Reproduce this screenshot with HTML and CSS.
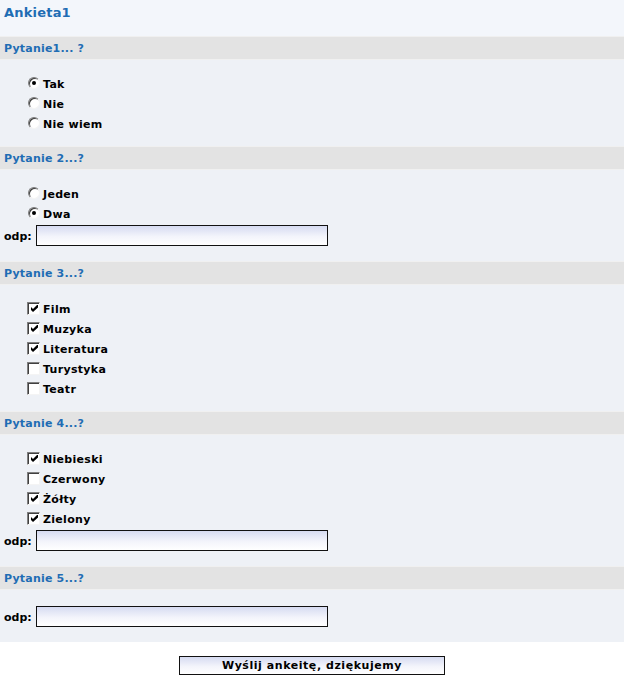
FILE: index.html
```html
<!DOCTYPE html>
<html lang="pl">
<head>
<meta charset="utf-8">
<title>Ankieta1</title>
<link rel="stylesheet" href="styles.css">
</head>
<body>
<form class="survey">
  <div class="title-band"><h1 class="title">Ankieta1</h1></div>

  <section class="q">
    <h2 class="q-head">Pytanie1... ?</h2>
    <div class="q-body">
      <label class="opt"><span class="radio on"><span class="dot"></span></span>Tak</label>
      <label class="opt"><span class="radio"></span>Nie</label>
      <label class="opt"><span class="radio"></span>Nie wiem</label>
    </div>
  </section>

  <section class="q">
    <h2 class="q-head">Pytanie 2...?</h2>
    <div class="q-body q-body-answer">
      <label class="opt"><span class="radio"></span>Jeden</label>
      <label class="opt"><span class="radio on"><span class="dot"></span></span>Dwa</label>
      <div class="answer"><span class="answer-label">odp:</span><span class="field"></span></div>
    </div>
  </section>

  <section class="q">
    <h2 class="q-head">Pytanie 3...?</h2>
    <div class="q-body">
      <label class="opt"><span class="check"><svg viewBox="0 0 7 7" width="7" height="7"><path d="M0 2 L2 4 L6 0 L7 0 L7 2.5 L2 7 L0 5 Z" fill="#000"/></svg></span>Film</label>
      <label class="opt"><span class="check"><svg viewBox="0 0 7 7" width="7" height="7"><path d="M0 2 L2 4 L6 0 L7 0 L7 2.5 L2 7 L0 5 Z" fill="#000"/></svg></span>Muzyka</label>
      <label class="opt"><span class="check"><svg viewBox="0 0 7 7" width="7" height="7"><path d="M0 2 L2 4 L6 0 L7 0 L7 2.5 L2 7 L0 5 Z" fill="#000"/></svg></span>Literatura</label>
      <label class="opt"><span class="check"></span>Turystyka</label>
      <label class="opt"><span class="check"></span>Teatr</label>
    </div>
  </section>

  <section class="q">
    <h2 class="q-head">Pytanie 4...?</h2>
    <div class="q-body q-body-answer">
      <label class="opt"><span class="check"><svg viewBox="0 0 7 7" width="7" height="7"><path d="M0 2 L2 4 L6 0 L7 0 L7 2.5 L2 7 L0 5 Z" fill="#000"/></svg></span>Niebieski</label>
      <label class="opt"><span class="check"></span>Czerwony</label>
      <label class="opt"><span class="check"><svg viewBox="0 0 7 7" width="7" height="7"><path d="M0 2 L2 4 L6 0 L7 0 L7 2.5 L2 7 L0 5 Z" fill="#000"/></svg></span>Żółty</label>
      <label class="opt"><span class="check"><svg viewBox="0 0 7 7" width="7" height="7"><path d="M0 2 L2 4 L6 0 L7 0 L7 2.5 L2 7 L0 5 Z" fill="#000"/></svg></span>Zielony</label>
      <div class="answer"><span class="answer-label">odp:</span><span class="field"></span></div>
    </div>
  </section>

  <section class="q">
    <h2 class="q-head">Pytanie 5...?</h2>
    <div class="q-body q-body-short">
      <div class="answer"><span class="answer-label">odp:</span><span class="field"></span></div>
    </div>
  </section>

  <div class="actions">
    <span class="submit">Wyślij ankeitę, dziękujemy</span>
  </div>
</form>
</body>
</html>
```

FILE: styles.css
```css
html, body {
  margin: 0;
  padding: 0;
  background: #ffffff;
}

.survey {
  font-family: "DejaVu Sans", Verdana, sans-serif;
  font-size: 11px;
  font-weight: bold;
  color: #000;
}

.title-band {
  background: #f3f6fb;
  height: 36px;
  padding-left: 4px;
  display: flex;
  align-items: flex-start;
}

.title {
  margin: 5px 0 0 0;
  font-size: 13px;
  font-weight: bold;
  color: #1f6db4;
  line-height: 16px;
  letter-spacing: 0.2px;
}

.q-head {
  margin: 0;
  height: 22px;
  line-height: 24px;
  padding-left: 4px;
  font-size: 11px;
  font-weight: bold;
  color: #1f6db4;
  background: #e3e3e3;
  border-top: 1px solid #f0f0f0;
  border-bottom: 1px solid #f0f0f0;
  letter-spacing: 0.2px;
  overflow: hidden;
}

.q-body {
  background: #eef1f6;
  padding: 13px 0 13px 0;
  display: flex;
  flex-direction: column;
}

.q-body-answer {
  padding-bottom: 15px;
}

.q-body-short {
  padding: 14px 0 15px 0;
}

.opt {
  box-sizing: border-box;
  display: flex;
  align-items: center;
  height: 20px;
  padding-top: 2px;
  padding-left: 27px;
  letter-spacing: 0.3px;
}

.radio {
  box-sizing: border-box;
  width: 12px;
  height: 12px;
  margin-left: 1px;
  margin-right: 3px;
  margin-top: -2px;
  border-radius: 50%;
  border: 1px solid;
  border-color: #7a7a7a #f4f4f4 #f4f4f4 #7a7a7a;
  background: #fff;
  box-shadow: inset 1px 1px 0 #3c3c3c;
  display: flex;
  align-items: center;
  justify-content: center;
}

.dot {
  width: 4px;
  height: 4px;
  border-radius: 50%;
  background: #000;
}

.check {
  box-sizing: border-box;
  width: 13px;
  height: 13px;
  margin-right: 3px;
  margin-top: -2px;
  border: 1px solid;
  border-color: #808080 #f4f4f4 #f4f4f4 #808080;
  box-shadow: inset 1px 1px 0 #404040;
  background: #fff;
  display: flex;
  align-items: center;
  justify-content: center;
  padding: 1px 0 0 1px;
}

.check svg {
  display: block;
}

.answer {
  display: flex;
  align-items: center;
  margin-top: 2px;
  padding-left: 4px;
  height: 21px;
}

.answer-label {
  width: 32px;
  padding-top: 1px;
}

.field {
  box-sizing: border-box;
  width: 292px;
  height: 21px;
  border: 1px solid #111;
  background: linear-gradient(to bottom, #d6dbf1 0%, #f3f4fb 55%, #ffffff 100%);
}

.actions {
  display: flex;
  justify-content: center;
  padding-top: 14px;
}

.submit {
  box-sizing: border-box;
  width: 266px;
  height: 19px;
  line-height: 17px;
  border: 1px solid #111;
  text-align: center;
  font-size: 11px;
  background: linear-gradient(to bottom, #d6dbf1 0%, #f3f4fb 55%, #ffffff 100%);
  letter-spacing: 0.55px;
}
```
